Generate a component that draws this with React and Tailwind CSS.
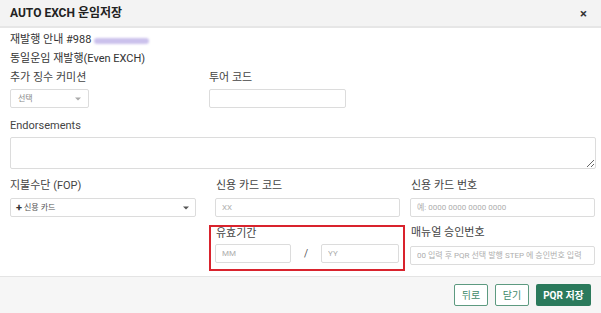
import React from 'react';

const Field = ({ placeholder, className = '' }) => (
  <input
    readOnly
    placeholder={placeholder}
    className={`shrink-0 min-w-0 h-[19px] border border-[#dcdcdc] rounded-[2px] bg-white px-[6px] text-[8px] text-[#333] placeholder:text-[#aeaeae] outline-none ${className}`}
  />
);

const Caret = ({ dark }) => (
  <svg width="6" height="4" viewBox="0 0 6 4" className="shrink-0">
    <path d="M0 0.5h6L3 3.5z" fill={dark ? '#555' : '#aaa'} />
  </svg>
);

const Label = ({ children, className = '' }) => (
  <div className={`shrink-0 h-[18px] flex items-center text-[11px] text-[#444] ${className}`}>{children}</div>
);

const App = () => {
  return (
    <div className="w-[601px] h-[313px] bg-white flex flex-col font-['Roboto','Noto_Sans_CJK_KR',sans-serif]">
      {/* header */}
      <div className="h-[28px] shrink-0 bg-[#f3f3f3] border-b-[2px] border-[#e6e6e6] flex items-center justify-between pl-[10px] pr-[14px]">
        <span className="text-[12px] font-bold text-[#222]">AUTO EXCH 운임저장</span>
        <span className="text-[13px] font-bold text-[#333] leading-none">×</span>
      </div>

      {/* body */}
      <div className="flex-1 px-[10px] pt-[3px]">
        <div className="h-[19px] flex items-center text-[11px] text-[#333]">
          재발행 안내 #988
          <span className="ml-[3px] w-[55px] h-[6px] rounded-full bg-[#cbc1ec] blur-[1px]" />
        </div>
        <div className="h-[19px] flex items-center text-[11px] text-[#333]">동일운임 재발행(Even EXCH)</div>

        <div className="flex">
          <Label className="w-[199px]">추가 징수 커미션</Label>
          <Label>투어 코드</Label>
        </div>
        <div className="flex mt-[2px]">
          <div className="w-[199px] shrink-0">
            <div className="w-[79px] h-[19px] border border-[#dcdcdc] rounded-[2px] flex items-center justify-between px-[7px]">
              <span className="text-[8px] text-[#888]">선택</span>
              <Caret />
            </div>
          </div>
          <Field className="w-[137px]" />
        </div>

        <Label className="mt-[9px]">Endorsements</Label>
        <textarea
          readOnly
          className="mt-[2px] block w-[586px] h-[32px] border border-[#dcdcdc] rounded-[2px] outline-none resize-y"
        />

        <div className="flex mt-[8px]">
          <Label className="w-[206px]">지불수단 (FOP)</Label>
          <Label className="w-[195px]">신용 카드 코드</Label>
          <Label>신용 카드 번호</Label>
        </div>
        <div className="flex mt-[3px]">
          <div className="shrink-0 w-[186px] h-[19px] border border-[#dcdcdc] rounded-[2px] flex items-center justify-between pl-[5px] pr-[6px]">
            <span className="text-[8px] text-[#555] flex items-center gap-[2px]">
              <span className="text-[11px] font-bold text-[#333] leading-none">+</span>신용 카드
            </span>
            <Caret dark />
          </div>
          <Field placeholder="XX" className="ml-[19px] w-[185px]" />
          <Field placeholder="예: 0000 0000 0000 0000" className="ml-[10px] w-[185px]" />
        </div>

        <div className="flex items-start mt-[8px]">
          <div className="w-[199px] shrink-0" />
          <div className="shrink-0 w-[196px] h-[46px] border-[2px] border-[#d9232d] pl-[4px] pr-[4px]">
            <div className="h-[14px] flex items-center text-[11px] text-[#444] pl-[1px]">유효기간</div>
            <div className="flex items-center mt-[3px]">
              <Field placeholder="MM" className="w-[76px]" />
              <span className="shrink-0 w-[30px] text-center text-[10px] text-[#555]">/</span>
              <Field placeholder="YY" className="w-[78px]" />
            </div>
          </div>
          <div className="shrink-0 ml-[5px] w-[186px]">
            <div className="h-[16px] flex items-center text-[11px] text-[#444] pl-[1px]">매뉴얼 승인번호</div>
            <Field placeholder="00 입력 후 PQR 선택 발행 STEP 에 승인번호 입력" className="mt-[3px] w-[185px]" />
          </div>
        </div>
      </div>

      {/* footer */}
      <div className="h-[37px] shrink-0 bg-[#f6f6f6] border-t border-[#e4e4e4] flex items-center justify-end gap-[7px] pr-[10px]">
        <button className="h-[22px] w-[34px] border border-[#5d9a80] rounded-[2px] bg-white text-[10px] text-[#3f8a6a]">뒤로</button>
        <button className="h-[22px] w-[34px] border border-[#5d9a80] rounded-[2px] bg-white text-[10px] text-[#3f8a6a]">닫기</button>
        <button className="h-[22px] w-[55px] rounded-[2px] bg-[#2b7a5c] text-[10px] font-bold text-white">PQR 저장</button>
      </div>
    </div>
  );
};

export default App;
